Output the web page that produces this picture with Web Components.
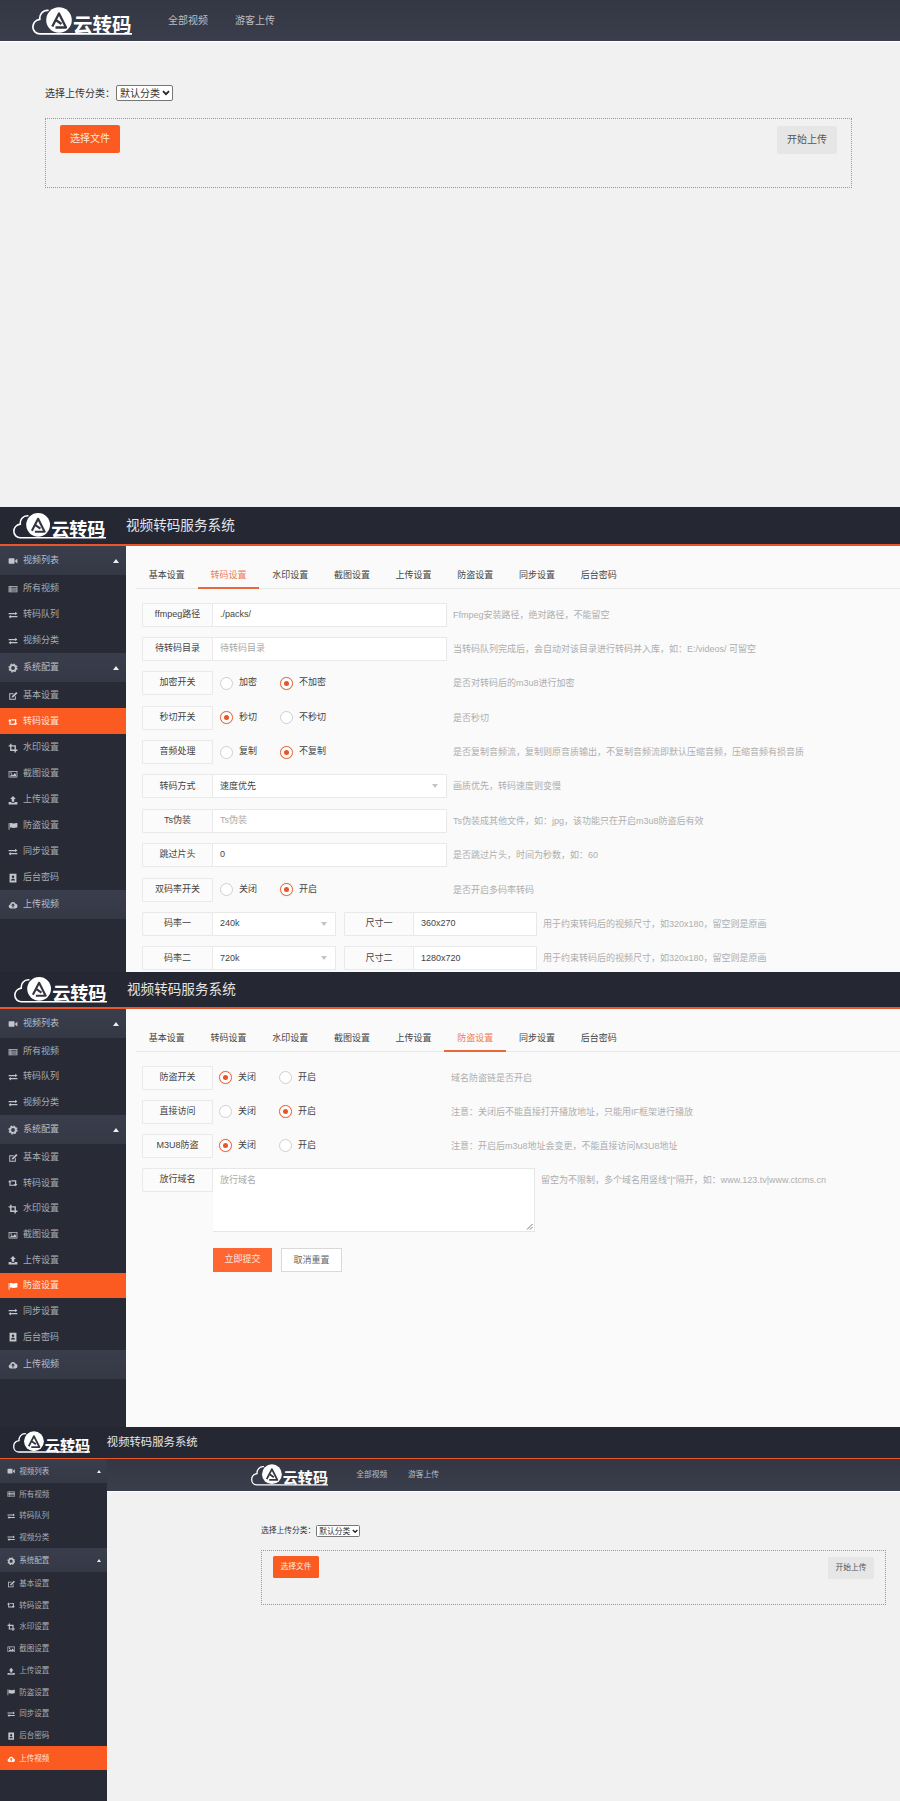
<!DOCTYPE html>
<html lang="zh">
<head>
<meta charset="utf-8">
<title>云转码</title>
<style>
  html, body { margin:0; padding:0; background:#f1f1f1; }
  body { width:900px; font:9px/1.3 "Liberation Sans","Noto Sans CJK SC",sans-serif; color:#444; }
  screen-panel[tall="507"] { height:507px; }
  screen-panel[tall="465"] { height:465px; --head-h:37px; }
  screen-panel[tall="455"] { height:455px; --head-h:35px; --row-gap:10px; --ctl-w:232px; --radio-pad:6px; --item-h:25.7px; }
  screen-panel[tall="374"] { height:374px; }
  .mini { zoom:.835; height:448px; --head-h:37px; --side-w:128px; }
  .frame { zoom:.9275; --inset:154px; }
</style>
</head>
<body>

<screen-panel tall="507">
  <upload-page></upload-page>
</screen-panel>

<screen-panel tall="465">
  <admin-shell active="转码设置" logo-x="13">
    <tab-bar active="转码设置"></tab-bar>
    <form-row label="ffmpeg路径" hint="Ffmpeg安装路径，绝对路径，不能留空"><text-field value="./packs/"></text-field></form-row>
    <form-row label="待转码目录" hint="当转码队列完成后，会自动对该目录进行转码并入库，如：E:/videos/ 可留空"><text-field placeholder="待转码目录"></text-field></form-row>
    <form-row label="加密开关" hint="是否对转码后的m3u8进行加密"><radio-pair a="加密" b="不加密" on="b"></radio-pair></form-row>
    <form-row label="秒切开关" hint="是否秒切"><radio-pair a="秒切" b="不秒切" on="a"></radio-pair></form-row>
    <form-row label="音频处理" hint="是否复制音频流，复制则原音质输出，不复制音频流即默认压缩音频，压缩音频有损音质"><radio-pair a="复制" b="不复制" on="b"></radio-pair></form-row>
    <form-row label="转码方式" hint="画质优先，转码速度则变慢"><text-field value="速度优先" caret></text-field></form-row>
    <form-row label="Ts伪装" hint="Ts伪装成其他文件，如：jpg，该功能只在开启m3u8防盗后有效"><text-field placeholder="Ts伪装"></text-field></form-row>
    <form-row label="跳过片头" hint="是否跳过片头，时间为秒数，如：60"><text-field value="0"></text-field></form-row>
    <form-row label="双码率开关" hint="是否开启多码率转码"><radio-pair a="关闭" b="开启" on="b"></radio-pair></form-row>
    <form-row label="码率一" hint="用于约束转码后的视频尺寸，如320x180，留空则是原画" style="--ctl-w:324px">
      <text-field value="240k" caret style="width:123px"></text-field>
      <field-label style="margin-left:8px;width:70px">尺寸一</field-label>
      <text-field value="360x270" style="width:124px"></text-field>
    </form-row>
    <form-row label="码率二" hint="用于约束转码后的视频尺寸，如320x180，留空则是原画" style="--ctl-w:324px">
      <text-field value="720k" caret style="width:123px"></text-field>
      <field-label style="margin-left:8px;width:70px">尺寸二</field-label>
      <text-field value="1280x720" style="width:124px"></text-field>
    </form-row>
  </admin-shell>
</screen-panel>

<screen-panel tall="455">
  <admin-shell active="防盗设置" logo-x="14">
    <tab-bar active="防盗设置"></tab-bar>
    <form-row label="防盗开关" hint="域名防盗链是否开启"><radio-pair a="关闭" b="开启" on="a"></radio-pair></form-row>
    <form-row label="直接访问" hint="注意：关闭后不能直接打开播放地址，只能用IF框架进行播放"><radio-pair a="关闭" b="开启" on="b"></radio-pair></form-row>
    <form-row label="M3U8防盗" hint="注意：开启后m3u8地址会变更，不能直接访问M3U8地址"><radio-pair a="关闭" b="开启" on="a"></radio-pair></form-row>
    <form-row label="放行域名" hint="留空为不限制，多个域名用竖线&quot;|&quot;隔开，如：www.123.tv|www.ctcms.cn" style="--ctl-w:322px;--row-h:64px;--row-gap:16px"><text-area placeholder="放行域名"></text-area></form-row>
    <form-actions></form-actions>
  </admin-shell>
</screen-panel>

<screen-panel tall="374">
  <admin-shell class="mini" active="上传视频" logo-x="15" logo-w="93">
    <upload-page class="frame"></upload-page>
  </admin-shell>
</screen-panel>

<script>
// icon shapes on a 16x16 box
const ICONS = {
  video: `<rect x="1" y="3.5" width="9.5" height="9" rx="1.2"/><path d="M11.5 7 15 4.2v7.6L11.5 9z"/>`,
  list: `<path fill-rule="evenodd" d="M1 3h14v10H1zM2 4.2v1.6h2V4.2zm3 0v1.6h9V4.2zM2 7.2v1.6h2V7.2zm3 0v1.6h9V7.2zM2 10.2v1.6h2v-1.6zm3 0v1.6h9v-1.6z"/>`,
  exchange: `<path d="M1 4.6h10.5V2.8L15 5.6l-3.5 2.8V6.6H1zM15 9.6H4.5V7.8L1 10.6l3.5 2.8v-1.8H15z"/>`,
  cog: `<circle cx="8" cy="8" r="4.6" fill="none" stroke="currentColor" stroke-width="3"/><circle cx="8" cy="8" r="6.4" fill="none" stroke="currentColor" stroke-width="2" stroke-dasharray="2.6 2.43"/>`,
  edit: `<path d="M2 3.5h7.5L8 5H3.5v7.5H11V9l1.5-1.5V14H2z"/><path d="M5.8 10.2 6.5 8l6.7-6.5 2 2L8.5 10z"/>`,
  retweet: `<path d="M4.6 3.6h8.6v6h2l-3 3.6-3-3.6h2V5.4H6.6zM3 3l3 3.6H4v4h6.4l1.8 1.8H2.2V6.6h-2z"/>`,
  crop: `<path fill="none" stroke="currentColor" stroke-width="2.2" d="M4.5 1v10.5H15M1 4.5h10.5V15"/>`,
  image: `<path fill-rule="evenodd" d="M1 3h14v10.5H1zM2.2 4.2v8.1h11.600V4.2zM3 11.500l3-3.500 2 2 3-3.500 2 2.500v2.500zM5 5a1.300 1.300 0 1 0 0 2.600A1.300 1.300 0 0 0 5 5z"/>`,
  upload: `<path d="M8 1.5l4.500 5H10v4.200H6V6.500H3.500zM1 11.300h4v1h6v-1h4V15H1z"/>`,
  flag: `<path d="M1 3h1.400v11H1zM3.200 3.600c3-1 4 .9 6 .5s4-1.200 5.800-.6v7c-1.800-.6-3.800.2-5.800.6s-3-1.500-6-.5z"/>`,
  book: `<path fill-rule="evenodd" d="M2.500 1h11v14h-11zM8 4a2 2 0 1 0 0 4 2 2 0 0 0 0-4zM4.800 12h6.400c0-2-1.300-3-3.200-3s-3.200 1-3.200 3z"/>`,
  cloud: `<path fill-rule="evenodd" d="M4 13.500a3.200 3.200 0 0 1-.5-6.300 4.500 4.500 0 0 1 8.700-1.200 3.800 3.800 0 0 1-.2 7.500zM8 5.200 4.900 8.600H7v3.200h2V8.600h2.100z"/>`,
};

class UiIcon extends HTMLElement {
  connectedCallback() {
    const root = this.shadowRoot || this.attachShadow({ mode: "open" });
    root.innerHTML = `
      <style>:host { display:inline-flex; width:1em; height:1em; } svg { width:100%; height:100%; fill:currentColor; }</style>
      <svg viewBox="0 0 16 16" aria-hidden="true">${ICONS[this.getAttribute("name")] || ""}</svg>`;
  }
}
customElements.define("ui-icon", UiIcon);

class AppLogo extends HTMLElement {
  connectedCallback() {
    const w = this.getAttribute("w") || 100;
    const root = this.shadowRoot || this.attachShadow({ mode: "open" });
    root.innerHTML = `
      <style>:host { display:block; flex:none; line-height:0; } svg { display:block; }</style>
      <svg width="${w}" height="${w * .36}" viewBox="0 -4 100 36">
        <path fill="none" stroke="#fff" stroke-width="1.7" stroke-linecap="round"
          d="M16 3.300C10.500 3 7.300 8 7.800 12.300 3.300 13 .9 16.500 .9 20c0 4 3 6.900 7 6.900H100"/>
        <circle cx="27" cy="13" r="12.800" fill="#fff"/>
        <path fill="none" stroke="#34363f" stroke-width="2.300" stroke-linejoin="round"
          d="M23.500 20.500H34L27 6.500 20.300 19.500M24.500 13.500l5 3.500"/>
        <text x="41" y="25" font-size="19.500" font-weight="700" fill="#fff"
          font-family="'Noto Sans CJK SC',sans-serif">云转码</text>
      </svg>`;
  }
}
customElements.define("app-logo", AppLogo);

// outer strip, one per photographed screen
class ScreenPanel extends HTMLElement {
  constructor() {
    super();
    this.attachShadow({ mode: "open" });
    this.shadowRoot.innerHTML = `
      <style>:host { display:block; overflow:hidden; position:relative; }</style>
      <slot></slot>`;
  }
}
customElements.define("screen-panel", ScreenPanel);

class UploadPage extends HTMLElement {
  constructor() {
    super();
    this.attachShadow({ mode: "open" });
    this.shadowRoot.innerHTML = `
      <style>
        :host { display:block; font-size:10px; color:#333; background:#f1f1f1; min-height:100%; --pad:calc(var(--inset, 0px) + 32px); }
        nav {
          display:flex; align-items:center; height:41px; padding-left:var(--pad);
          background:linear-gradient(#343743, #3a3d4b); border-bottom:1px solid #fff;
        }
        nav a { color:#bdbec3; text-decoration:none; line-height:41px; margin-right:27px; }
        nav app-logo { margin-right:36px; }
        main { padding:43px 0 0 calc(var(--inset, 0px) + 45px); }
        .pick { display:flex; align-items:center; height:16px; }
        .sel { position:relative; display:block; margin-left:1px; line-height:0; }
        select {
          appearance:none; width:57px; height:16px; margin:0; padding:0 0 0 3px;
          font:10px "Liberation Sans","Noto Sans CJK SC",sans-serif;
          color:#333; background:#fff; border:1px solid #767676; border-radius:2px;
        }
        .sel svg { position:absolute; right:3px; top:5px; pointer-events:none; }
        .box {
          display:flex; justify-content:space-between; align-items:flex-start;
          box-sizing:border-box; width:807px; height:70px; margin-top:17px; padding:6px 14px;
          border:1px dotted #999;
        }
        .btn { display:block; width:60px; height:28px; line-height:28px; text-align:center; border-radius:2px; }
        .go { background:#fb5a20; color:#ffe9dc; }
        .start { background:#e6e6e6; color:#555; margin-top:1px; }
      </style>
      <nav>
        <app-logo></app-logo>
        <a>全部视频</a>
        <a>游客上传</a>
      </nav>
      <main>
        <div class="pick">
          <span>选择上传分类：</span>
          <span class="sel">
            <select><option>默认分类</option></select>
            <svg width="8" height="6" viewBox="0 0 8 6"><path d="M1 1.200 4 4.200 7 1.200" fill="none" stroke="#222" stroke-width="1.700"/></svg>
          </span>
        </div>
        <div class="box">
          <span class="btn go">选择文件</span>
          <span class="btn start">开始上传</span>
        </div>
      </main>`;
  }
}
customElements.define("upload-page", UploadPage);

const MENU = [
  { group:"视频列表", icon:"video", caret:true },
  { item:"所有视频", icon:"list" },
  { item:"转码队列", icon:"exchange" },
  { item:"视频分类", icon:"exchange" },
  { group:"系统配置", icon:"cog", caret:true },
  { item:"基本设置", icon:"edit" },
  { item:"转码设置", icon:"retweet" },
  { item:"水印设置", icon:"crop" },
  { item:"截图设置", icon:"image" },
  { item:"上传设置", icon:"upload" },
  { item:"防盗设置", icon:"flag" },
  { item:"同步设置", icon:"exchange" },
  { item:"后台密码", icon:"book" },
  { group:"上传视频", icon:"cloud" },
];

class SideMenu extends HTMLElement {
  connectedCallback() {
    const active = this.getAttribute("active");
    const rows = MENU.map(m => {
      const name = m.group || m.item;
      const cls = [m.group ? "group" : "item", name === active ? "on" : ""].join(" ");
      return `<div class="${cls}"><ui-icon name="${m.icon}"></ui-icon><span>${name}</span>${m.caret ? `<i></i>` : ""}</div>`;
    }).join("");
    const root = this.shadowRoot || this.attachShadow({ mode: "open" });
    root.innerHTML = `
      <style>
        :host { display:block; flex:none; width:var(--side-w, 126px); background:#282b36; color:#a9abb1; }
        div { display:flex; align-items:center; padding:1.5px 0 0 8px; box-sizing:border-box; }
        ui-icon { font-size:10px; margin-right:5px; color:#c4c5ca; }
        .item { height:var(--item-h, 26px); }
        .group { height:29px; background:linear-gradient(#3a3d4b, #353845); color:#bcbdc3; }
        .on { background:#fb5a20; color:#ffe4d6; }
        .on ui-icon { color:#fff; }
        i { margin-left:auto; margin-right:7px; border:solid transparent; border-width:0 3.5px 4px; border-bottom-color:#eee; }
      </style>
      ${rows}`;
  }
}
customElements.define("side-menu", SideMenu);

class AdminShell extends HTMLElement {
  connectedCallback() {
    const root = this.shadowRoot || this.attachShadow({ mode: "open" });
    root.innerHTML = `
      <style>
        :host { display:flex; flex-direction:column; height:100%; }
        header {
          display:flex; align-items:center; flex:none; height:var(--head-h, 37px);
          padding-left:${this.getAttribute("logo-x") || 13}px;
          background:#252833; border-bottom:2px solid #e9562a;
        }
        app-logo { margin-right:20px; }
        span { color:#e4e4e6; font-size:13.6px; line-height:1.2; padding-top:1px; }
        .body { flex:1; display:flex; min-height:0; }
        main { flex:1; min-width:0; background:#fafafa; overflow:hidden; }
      </style>
      <header>
        <app-logo w="${this.getAttribute("logo-w") || 93}"></app-logo>
        <span>视频转码服务系统</span>
      </header>
      <div class="body">
        <side-menu active="${this.getAttribute("active")}"></side-menu>
        <main><slot></slot></main>
      </div>`;
  }
}
customElements.define("admin-shell", AdminShell);

const TABS = ["基本设置","转码设置","水印设置","截图设置","上传设置","防盗设置","同步设置","后台密码"];

class TabBar extends HTMLElement {
  connectedCallback() {
    const active = this.getAttribute("active");
    const root = this.shadowRoot || this.attachShadow({ mode: "open" });
    root.innerHTML = `
      <style>
        :host { display:flex; height:26px; margin:16px 0 13.5px 10px; border-bottom:1px solid #e9e9e9; }
        a { box-sizing:border-box; width:61.7px; height:27px; line-height:26px; text-align:center; color:#444; }
        .on { color:#ee7a50; border-bottom:2px solid #e8693c; }
      </style>
      ${TABS.map(t => `<a class="${t === active ? "on" : ""}">${t}</a>`).join("")}`;
  }
}
customElements.define("tab-bar", TabBar);

class FieldLabel extends HTMLElement {
  constructor() {
    super();
    this.attachShadow({ mode: "open" });
    this.shadowRoot.innerHTML = `
      <style>
        :host {
          display:flex; align-items:center; justify-content:center; flex:none; box-sizing:border-box;
          width:71px; height:24px; background:#fbfbfb; border:1px solid #e9e9e9; border-radius:1px 0 0 1px; color:#444;
        }
      </style>
      <slot></slot>`;
  }
}
customElements.define("field-label", FieldLabel);

class FormRow extends HTMLElement {
  connectedCallback() {
    const root = this.shadowRoot || this.attachShadow({ mode: "open" });
    root.innerHTML = `
      <style>
        :host { display:flex; align-items:flex-start; height:var(--row-h, 24px); margin:0 0 var(--row-gap, 10.4px) 16px; }
        .ctl { display:flex; flex:none; width:var(--ctl-w, 234px); height:100%; }
        .hint { margin-left:6px; line-height:24px; color:#aeaeae; white-space:nowrap; }
      </style>
      <field-label>${this.getAttribute("label")}</field-label>
      <div class="ctl"><slot></slot></div>
      <span class="hint">${this.getAttribute("hint")}</span>`;
  }
}
customElements.define("form-row", FormRow);

class TextField extends HTMLElement {
  connectedCallback() {
    const ph = this.getAttribute("placeholder");
    const root = this.shadowRoot || this.attachShadow({ mode: "open" });
    root.innerHTML = `
      <style>
        :host {
          display:flex; align-items:center; flex:1; box-sizing:border-box; height:24px; padding:0 7px;
          background:#fff; border:1px solid #e9e9e9; border-left:0; color:#444; min-width:0;
        }
        .ph { color:#a9a9a9; }
        i { margin-left:auto; margin-right:1px; border:solid transparent; border-width:4px 3.5px 0; border-top-color:#c4c4c4; }
      </style>
      <span class="${ph ? "ph" : ""}">${ph || this.getAttribute("value")}</span>
      ${this.hasAttribute("caret") ? "<i></i>" : ""}`;
  }
}
customElements.define("text-field", TextField);

class TextArea extends HTMLElement {
  connectedCallback() {
    const root = this.shadowRoot || this.attachShadow({ mode: "open" });
    root.innerHTML = `
      <style>
        :host {
          display:block; position:relative; flex:1; box-sizing:border-box; padding:5px 7px;
          background:#fff; border:1px solid #e6e6e6; border-left:0; color:#a9a9a9; line-height:12px;
        }
        svg { position:absolute; right:1px; bottom:1px; }
      </style>
      <span>${this.getAttribute("placeholder")}</span>
      <svg width="7" height="7" viewBox="0 0 7 7"><path d="M1 6.5 6.5 1M4 6.5 6.5 4" stroke="#777" stroke-width="1" fill="none"/></svg>`;
  }
}
customElements.define("text-area", TextArea);

class RadioPair extends HTMLElement {
  connectedCallback() {
    const on = this.getAttribute("on");
    const opt = k => `<label class="${k === on ? "on" : ""}"><b></b>${this.getAttribute(k)}</label>`;
    const root = this.shadowRoot || this.attachShadow({ mode: "open" });
    root.innerHTML = `
      <style>
        :host { display:flex; align-items:center; height:24px; padding-left:var(--radio-pad, 7px); color:#444; }
        label { display:flex; align-items:center; width:60px; }
        b {
          position:relative; box-sizing:border-box; width:13px; height:13px; margin-right:6px;
          border:1px solid #cfcfcf; border-radius:50%; background:#fff;
        }
        .on b { border-color:#e4683f; box-shadow:0 0 1px #f0a68c; }
        .on b::after {
          content:""; position:absolute; left:3px; top:3px; width:5px; height:5px;
          border-radius:50%; background:#e4572b;
        }
      </style>
      ${opt("a")}${opt("b")}`;
  }
}
customElements.define("radio-pair", RadioPair);

class FormActions extends HTMLElement {
  constructor() {
    super();
    this.attachShadow({ mode: "open" });
    this.shadowRoot.innerHTML = `
      <style>
        :host { display:flex; gap:9px; margin-left:87px; }
        span { box-sizing:border-box; height:24px; line-height:23px; text-align:center; }
        .ok { width:59px; background:#ff6632; color:#ffe6da; }
        .no { width:61px; background:#fff; color:#666; border:1px solid #d9d9d9; }
      </style>
      <span class="ok">立即提交</span>
      <span class="no">取消重置</span>`;
  }
}
customElements.define("form-actions", FormActions);
</script>
</body>
</html>
